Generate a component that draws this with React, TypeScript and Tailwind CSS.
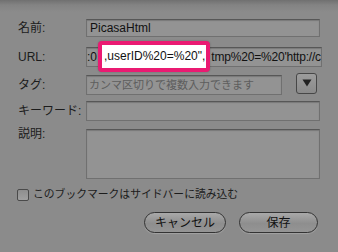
import React from "react";

const field =
  "bg-[#939393] border border-[#707070] border-t-[#575757] shadow-[inset_0_1px_1px_rgba(0,0,0,0.18)]";

function Label({ children, className = "" }: { children: React.ReactNode; className?: string }) {
  return (
    <div className={`w-[68px] shrink-0 text-[12px] text-[#1c1c1c] leading-none ${className}`}>{children}</div>
  );
}

export default function App() {
  return (
    <div
      className="w-[338px] h-[252px] overflow-hidden flex flex-col bg-[linear-gradient(to_bottom,#707070_0px,#838383_5px,#8b8b8b_12px,#8b8b8b_100%)] pl-[18px] pr-[18px] pt-[19px]"
      style={{ fontFamily: '"Lucida Grande","Liberation Sans","Noto Sans CJK JP",sans-serif' }}
    >
      {/* name */}
      <div className="flex items-center h-[18px]">
        <Label>名前:</Label>
        <div className={`${field} flex-1 h-[18px] flex items-center pl-[3px] text-[12px] text-[#111]`}>PicasaHtml</div>
      </div>

      {/* URL */}
      <div className="flex items-center h-[20px] mt-[10px]">
        <Label>URL:</Label>
        <div className={`${field} flex-1 h-[20px] flex items-center whitespace-nowrap overflow-visible text-[12px] text-[#111]`}>
          <span>:0</span>
          <span className="relative z-10 ml-[1px] h-[31px] mt-[-2px] flex items-center bg-white border-[4px] border-[#ea1a72] rounded-[4px] pl-[2px] pr-[1px] shadow-[0_0_2px_rgba(0,0,0,0.25)]">
            ,userID%20=%20",
          </span>
          <span className="ml-[1px] overflow-hidden tracking-[-0.2px]">tmp%20=%20'http://c</span>
        </div>
      </div>

      {/* tags */}
      <div className="flex items-center h-[20px] mt-[8px]">
        <Label>タグ:</Label>
        <div className={`${field} w-[196px] h-[20px] flex items-center pl-[2px] text-[11px] text-[#5d5d5d] whitespace-nowrap overflow-hidden`}>
          カンマ区切りで複数入力できます
        </div>
        <div className="ml-[14px] w-[21px] h-[21px] rounded-[3px] border border-[#474747] bg-[linear-gradient(to_bottom,#9c9c9c,#8a8a8a)] flex items-center justify-center mt-[-4px]">
          <svg width="10" height="8" viewBox="0 0 10 8">
            <path d="M0.5 0.5 L9.5 0.5 L5 7.5 Z" fill="#222" />
          </svg>
        </div>
      </div>

      {/* keyword */}
      <div className="flex items-center h-[20px] mt-[6px]">
        <Label>キーワード:</Label>
        <div className={`${field} flex-1 h-[20px]`} />
      </div>

      {/* description */}
      <div className="flex items-start h-[50px] mt-[8px]">
        <Label className="mt-[-1px]">説明:</Label>
        <div className={`${field} flex-1 h-[50px]`} />
      </div>

      {/* checkbox */}
      <div className="flex items-center h-[13px] mt-[9px] ml-[-1px]">
        <div className="w-[12px] h-[12px] rounded-[2px] border border-[#4a4a4a] bg-[linear-gradient(to_bottom,#8e8e8e,#a0a0a0)]" />
        <span className="ml-[4px] text-[10.8px] text-[#1c1c1c] leading-none whitespace-nowrap">
          このブックマークはサイドバーに読み込む
        </span>
      </div>

      {/* buttons */}
      <div className="flex justify-end mt-[11px] mr-[2px] gap-[13px]">
        <div className="w-[82px] h-[21px] rounded-full border-[1.5px] border-[#333] bg-[linear-gradient(to_bottom,#a9a9a9,#8e8e8e_55%,#959595)] flex items-center justify-center text-[12px] text-[#111] leading-none shadow-[0_1px_1px_rgba(255,255,255,0.2)]">
          キャンセル
        </div>
        <div className="w-[79px] h-[21px] rounded-full border-[1.5px] border-[#333] bg-[linear-gradient(to_bottom,#a9a9a9,#8e8e8e_55%,#959595)] flex items-center justify-center text-[12px] text-[#111] leading-none shadow-[0_1px_1px_rgba(255,255,255,0.2)]">
          保存
        </div>
      </div>
    </div>
  );
}
